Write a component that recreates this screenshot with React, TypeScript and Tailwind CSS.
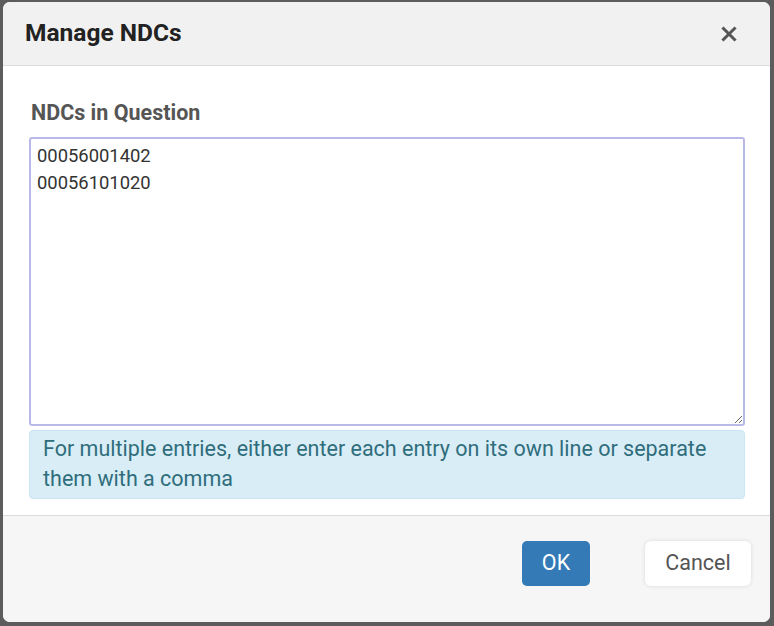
import React, { useState } from 'react';

const CloseIcon: React.FC = () => (
  <svg width="16" height="16" viewBox="0 0 16 16" className="text-[#555]">
    <path d="M2.5 2.5 L13.5 13.5 M13.5 2.5 L2.5 13.5" stroke="currentColor" strokeWidth="3" strokeLinecap="square" />
  </svg>
);

export default function App() {
  const [ndcs, setNdcs] = useState('00056001402\n00056101020');

  return (
    <div
      className="w-[774px] h-[626px] bg-[#5c5c5c] pl-[3px] pt-[2px] pr-[4px] pb-[4px]"
      style={{ fontFamily: 'Roboto, "Liberation Sans", sans-serif' }}
    >
      <div className="flex flex-col h-full rounded-[7px] overflow-hidden bg-white">
        {/* header */}
        <div className="h-[64px] flex items-center justify-between pl-[22px] pr-[33px] bg-[#f1f1f1] border-b border-[#dcdcdc]">
          <h4 className="text-[24.5px] font-bold text-[#222]">Manage NDCs</h4>
          <button className="flex items-center justify-center">
            <CloseIcon />
          </button>
        </div>

        {/* body */}
        <div className="flex-1 bg-white pt-[34px] pl-[26px] pr-[25px] pb-[15px] flex flex-col">
          <label className="text-[21.5px] leading-[26px] font-bold text-[#555] pl-[2px] mb-[11px]">
            NDCs in Question
          </label>
          <textarea
            value={ndcs}
            onChange={(e) => setNdcs(e.target.value)}
            className="h-[289px] w-full border-2 border-[#b9b9e8] rounded-[3px] px-[6px] pt-[3px] text-[18.4px] leading-[27px] text-[#333] outline-none"
          />
          <div className="mt-[4px] h-[69px] bg-[#d9edf7] border border-[#c9e6f2] rounded-[4px] pl-[13px] pt-[3px] text-[21.5px] leading-[30px] text-[#2f6d7c]">
            For multiple entries, either enter each entry on its own line or separate them with a comma
          </div>
        </div>

        {/* footer */}
        <div className="h-[107px] bg-[#f6f6f6] border-t border-[#dcdcdc] flex justify-end items-start pt-[25px] pr-[19px] gap-[55px]">
          <button className="w-[68px] h-[45px] rounded-[5px] bg-[#337ab7] text-white text-[21.5px]">
            OK
          </button>
          <button className="w-[106px] h-[45px] rounded-[6px] bg-white text-[#555] text-[21.5px] shadow-[0_0_4px_rgba(0,0,0,0.12)]">
            Cancel
          </button>
        </div>
      </div>
    </div>
  );
}
